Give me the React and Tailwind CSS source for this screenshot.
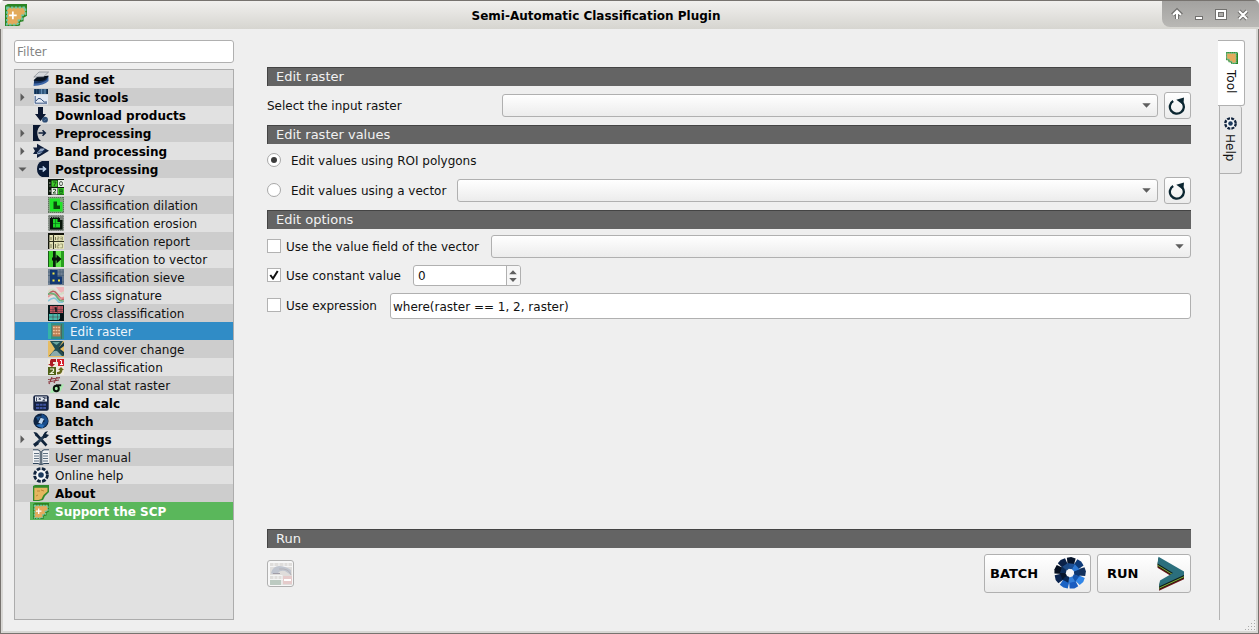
import React from "react";

const Svg = ({ size = 16, children, className = "" }) => (
  <svg width={size} height={size} viewBox="0 0 16 16" className={"shrink-0 " + className}>{children}</svg>
);

const Scp = ({ plus }) => (
  <>
    <path d="M0 1L2 0H16V8.5L13.5 10V12.5L11 13V15.5L9.5 16H0Z" fill="#2b8423" />
    <path d="M1.5 2.5H14.8V7.5L12.3 8.5V11L9.8 12V14L8.5 15H1.5Z" fill="#e3aa5c" stroke="#6cc9a6" strokeWidth="1.4" strokeDasharray="1.8 1" />
    {plus && <path d="M5.7 5.5V11M3 8.2H8.5" stroke="#fff" strokeWidth="1.3" />}
  </>
);

const Life = () => (
  <>
    <circle cx="8" cy="8" r="6.4" fill="#f5f7f9" stroke="#10233d" strokeWidth="2.9" strokeDasharray="3.65 1.375" />
    <circle cx="8" cy="8" r="2.8" fill="#1c3a5e" />
  </>
);

const ringOuter = ["#06142a", "#0d3a78", "#12305c", "#3186e8", "#1a5cc0", "#1b63c4", "#0a2450", "#050f20", "#0a2148"];
const ringInner = ["#1c4f94", "#2d78d2", "#0b356f", "#1253ac", "#347fda", "#0a2a58", "#07162c", "#0c2b56", "#1d4b86"];

const Ring = () => (
  <>
    {ringOuter.map((fill, i) => (
      <path key={"o" + i} transform={"rotate(" + (i * 40 + 4) + " 8 8)"} d="M5.9 .5L8 0L10.3 .6L9.6 4.2L6.6 4.3Z" fill={fill} />
    ))}
    {ringInner.map((fill, i) => (
      <path key={"i" + i} transform={"rotate(" + (i * 40 + 12) + " 8 8)"} d="M6.1 3.4L9.6 3.1L9.1 5.8L7.2 6.1Z" fill={fill} />
    ))}
  </>
);

const icons = {
  band: <><path d="M1 10.5L6 9L15.5 6V10Q11 14.5 .5 15Z" fill="#3f68a8" /><path d="M1 9L5 6L15.5 4.5L14 9Q9 12.5 1 12.5Z" fill="#173463" /><path d="M.5 9.5L5 5H15.8L12 9Q8 11 .5 9.5Z" fill="#08121f" /><path d="M.8 6L6 1H15.6L10.5 5.8Z" fill="#d5d8dc" stroke="#737981" strokeWidth=".6" /></>,
  basic: <><rect x="1" width="14" height="5" fill="#31587f" /><path d="M2.5 0V5M5 0V5" stroke="#102e50" strokeWidth="1.6" /><path d="M8.5 0V5M12 0V5" stroke="#638cb3" /><path d="M14.2 0V5" stroke="#0c2442" strokeWidth="1.4" /><rect x="1" y="5.5" width="14" height="10" fill="#e4eaf4" /><path d="M2.2 7V14.2H14M3 12Q5 8.5 7 9.5T10 12T14 13" fill="none" stroke="#274575" strokeWidth=".9" /></>,
  down: <><path d="M5 0H10V7H13L7.5 14L2 7H5Z" fill="#0b1730" /><circle cx="12" cy="12.7" r="2.9" fill="#2b4b73" /><path d="M10.5 14L13.5 12" stroke="#527299" /></>,
  pre: <><path d="M0 0H8Q4.3 3 4.3 8T8 16H0Z" fill="#0a1730" /><path d="M5.5 8H12M9.5 5.3L12.3 8L9.5 10.7" fill="none" stroke="#10203c" strokeWidth="1.5" /></>,
  proc: <><path d="M0 4.5H4V.8L16 7.8L4 15V11H0L2 8Z" fill="#101f3c" /><path d="M4.3 9.5L7.5 5.5H12L9.5 9Q7 11.5 4.3 11.5Z" fill="#98abc7" /><path d="M5 9.3L9 8.8L12 6.5" fill="none" stroke="#203c68" /></>,
  post: <><path d="M9 0H16V16H9Q4 14 4 8T9 0Z" fill="#0a1a36" /><path d="M6 8H12.5M9.7 5.5L12.5 8L9.7 10.5" fill="none" stroke="#c5d8f0" strokeWidth="1.6" /></>,
  accuracy: <><rect width="16" height="16" fill="#0b160c" /><rect x="3.5" y="1.5" width="6" height="6.3" fill="#3fc928" /><rect x="10" y="1" width="6" height="7" fill="#eaf1e8" /><rect x="3.5" y="9" width="6" height="6.5" fill="#e8efe5" /><rect x="10" y="9" width="6" height="6.5" fill="#3fcb2a" /><path d="M5 3H8L6 7M5 10.3H7.5V12L5 14H8" fill="none" stroke="#164716" strokeWidth=".9" /><ellipse cx="13" cy="4.6" rx="1.5" ry="2.1" fill="none" stroke="#404a40" strokeWidth=".9" /><path d="M11.7 10.3H14.3V12.2H11.7V14.3H14.3V12.2H11.7Z" fill="none" stroke="#0b6116" strokeWidth=".8" /><path d="M1 4H2.5M1 12H3M1.5 7H2.5" stroke="#b0bdb0" /></>,
  dilation: <><rect width="16" height="16" fill="#83a080" /><path d="M1.5 1.5H12V5H14.5V14.5H2Z" fill="#21e429" /><path d="M5.5 4.5H9V8.5H12V12H5.5Z" fill="#094d0c" /><path d="M0 .5H16M.5 0V16M15.5 0V16M0 15.5H16" stroke="#5d715c" strokeDasharray="1 1" /></>,
  erosion: <><rect width="16" height="16" fill="#79817a" /><path d="M2 2H12V5H14.5V14.5H2Z" fill="#07150b" /><path d="M5 4H9.5V7H12V12.5H5Z" fill="#1ed928" /><path d="M7.5 4V12M5 8.5H12" stroke="#0b751a" strokeWidth=".7" /><path d="M0 .5H16M.5 0V16M15.5 0V16M2 2.5H12M0 15.5H16" stroke="#a5ada5" strokeDasharray="1 1.2" /></>,
  report: <><rect width="16" height="16" fill="#e4e4b8" /><path d="M0 1H16M.5 0V16" stroke="#11130b" strokeWidth="1.8" /><path d="M5.5 1V16M0 8.5H16" stroke="#2e301d" strokeWidth="1.1" /><path d="M3 4V7M3 11V15M7.5 4V7M7.5 11V15" stroke="#747451" /><path d="M9.3 4H11V5.3H9.3V7H11.3M12.3 4H14.5V7H12.3M12.3 5.5H14M9.3 11H11V12.7H9.3V14.8H11.3M12.3 11H14.5V14.8H12.3" fill="none" stroke="#85855d" strokeWidth=".7" /></>,
  vector: <><rect width="16" height="16" fill="#185918" /><rect x="1" width="4" height="16" fill="#39cf29" /><rect x="8" width="5" height="16" fill="#62e84c" /><path d="M6 0V16" stroke="#06220b" strokeWidth="2" /><rect x="13" width="3" height="16" fill="#289e1f" /><path d="M4 6.5H8.5V3.5L13.5 8L8.5 12.5V9.5H4Z" fill="#06120a" /></>,
  sieve: <><rect width="16" height="16" fill="#718194" /><path d="M0 3H16M0 6.5H16M3 0V16M12 0V16M15 0V16M0 13H16" stroke="#4d6276" strokeWidth=".8" /><path d="M2 1H9.5V7.5H14V15H2Z" fill="#123872" /><path d="M4.5 3.5H6.5V5.5H4.5M4.5 10.5H6.5V12.5H4.5M10 10.5H12V12.5H10" fill="#f1e545" /></>,
  signature: <><rect width="16" height="16" fill="#e5dedb" /><path d="M8 0H16V7L12 5Z" fill="#efb5ba" /><path d="M0 5Q5 0 8 5T16 5" fill="none" stroke="#d2dfc7" strokeWidth="2" /><path d="M0 8Q5 1 9 7T16 12" fill="none" stroke="#bd5c61" strokeWidth="1.6" /><path d="M0 10Q5 5 9 9T16 10" fill="none" stroke="#e99294" strokeWidth="1.6" /><path d="M0 7Q6 5 9 10T16 14" fill="none" stroke="#6db27a" strokeWidth="1.7" /><path d="M0 14Q6 9 9 13T15 15" fill="none" stroke="#85c7d8" strokeWidth="1.7" /></>,
  cross: <><rect width="16" height="16" fill="#07191c" /><rect x="2" y="1" width="13" height="7" fill="#c75860" /><rect x="1" y="9" width="11" height="6" fill="#48b9aa" /><path d="M2 4.5H15M1 12H12M5 1V15M9.5 1V15M13 1V8M2 6.5H15" stroke="#4c3540" strokeWidth=".5" /><path d="M6.5 3H8V7M12 10H14.5V12L12 14.5H15" fill="none" stroke="#041014" strokeWidth="1.5" /></>,
  edit: <><rect width="16" height="16" fill="#348f85" /><path d="M1.5 0V16" stroke="#35b4a7" strokeWidth="3" /><rect x="4.5" y="2.5" width="8" height="11" fill="#ba7a50" /><path d="M5 4.5H12M5 7.5H12M5 10.5H12" stroke="#f0c49c" strokeWidth="1.4" strokeDasharray="1.8 .8" /><path d="M13.5 1V16" stroke="#48685c" /></>,
  land: <><rect width="16" height="16" fill="#e7bd63" /><path d="M2 0H15L10.5 7L16 15H1L7 8Z" fill="#214e55" /><path d="M4 1H12L8.5 4Z" fill="#6aa59e" /><path d="M2 15Q5 9 9 10L14 15Z" fill="#8aabac" /><path d="M10 7L16 1V5L12 8L16 11V15Z" fill="#183943" /></>,
  reclass: <><rect width="16" height="16" fill="#eee9dd" /><path d="M3 0H8V3H5V5H7L4 8L0 5H2V2Z" fill="#ab1b23" /><path d="M9 0H16V7H10V3H9Z" fill="#d41f2a" /><path d="M12 1.5H13.5V5.5M12 5.5H15" fill="none" stroke="#fff" /><rect x="0" y="8" width="8" height="8" fill="#4d6116" /><path d="M2 10H5.5V12L2.5 14.5H6" fill="none" stroke="#e9efd6" strokeWidth="1.2" /><path d="M13 8L16 11H14.5Q14 15.5 9 15.5V13Q12 13.5 12 11H10Z" fill="#676a1b" /></>,
  zonal: <><path d="M4 10.5L16 7L12.5 14.5L2 16Z" fill="#a7ebae" /><path d="M0 5L11 3M0 2.5L12 .7M4 0L1 7M9 0L6 6" stroke="#8d3a43" strokeWidth="1.2" /><ellipse cx="8.3" cy="11.5" rx="2.5" ry="2.8" fill="none" stroke="#08140c" strokeWidth="2" /><path d="M8 8.3H13.2" stroke="#08140c" strokeWidth="1.9" /></>,
  calc: <><rect x=".3" y=".3" width="15.4" height="15.4" rx="2" fill="#14213f" /><rect x="2" y="1.5" width="12" height="5" fill="#e2e7ef" /><path d="M3.5 2.5V6M5.7 2.7L7.7 5M7.7 2.7L5.7 5M9.7 2.5H11.7V4L9.7 5.7H12M13 2V4" fill="none" stroke="#14213f" strokeWidth=".8" /><path d="M3 9.7H13M3 13H13" stroke="#3f54a0" strokeWidth="2" strokeDasharray="3 .6" /></>,
  batch: <><circle cx="8" cy="8" r="7.6" fill="#0d2342" /><path d="M9 1Q14 3 15 8Q14 13 9 15L7 12L12 8L8 4Z" fill="#184c8b" /><path d="M3 12Q6 15 10 15L11 12L7 11Z" fill="#2b70ba" /><path d="M3 4L8 3L5 8Z" fill="#245891" /><path d="M7.7 4.8L11 6L8.7 11L5.3 9.7Z" fill="#bdd5ef" /></>,
  settings: <><path d="M3 3L13.5 14.5" stroke="#10243b" strokeWidth="2.6" /><path d="M.5 1L3.5 1.5L5.5 4.5L3 5.5Z" fill="#10243b" /><path d="M3 13L12 4.5" stroke="#253c54" strokeWidth="3" /><path d="M10 4L12 1L15 0L13 3L16 4L13 7H10Z" fill="#10243b" /><path d="M0 13L4 10.5L6 13L2 16Z" fill="#10243b" /></>,
  manual: <><path d="M0 1Q4 0 7.2 2V15Q4 13 0 14ZM16 1Q12 0 8.8 2V15Q12 13 16 14Z" fill="#f1f3f5" /><path d="M7.2 2V16M8.8 2V16" stroke="#1e3349" strokeWidth=".9" /><path d="M1 4.5H6M1 7H6M1 9.5H6M1 12H6M10 4.5H15M10 7H15M10 9.5H15M10 12H15" stroke="#5e7183" /><path d="M0 .8H5L7 2M16 .8H11L9 2M0 14.5H5L7.5 15.5M16 14.5H11L8.5 15.5" fill="none" stroke="#2c435a" /></>,
  help: <Life />,
  about: <><path d="M0 1L2 0H16V7L12 11L10 15L6 16H0Z" fill="#32892a" /><path d="M1.3 2.7H14.5V6.5L10.5 10L8.5 14L5.5 15H1.3Z" fill="#e5b65f" /><path d="M4 6H7M8 5L11 6M3 11L5 10" stroke="#b98233" strokeWidth=".9" /></>,
  support: <Scp plus />,
};

const rows = [
  ["Band set", "band", 1],
  ["Basic tools", "basic", 1, "r"],
  ["Download products", "down", 1],
  ["Preprocessing", "pre", 1, "r"],
  ["Band processing", "proc", 1, "r"],
  ["Postprocessing", "post", 1, "d"],
  ["Accuracy", "accuracy", 2],
  ["Classification dilation", "dilation", 2],
  ["Classification erosion", "erosion", 2],
  ["Classification report", "report", 2],
  ["Classification to vector", "vector", 2],
  ["Classification sieve", "sieve", 2],
  ["Class signature", "signature", 2],
  ["Cross classification", "cross", 2],
  ["Edit raster", "edit", 2],
  ["Land cover change", "land", 2],
  ["Reclassification", "reclass", 2],
  ["Zonal stat raster", "zonal", 2],
  ["Band calc", "calc", 1],
  ["Batch", "batch", 1],
  ["Settings", "settings", 1, "r"],
  ["User manual", "manual", 0],
  ["Online help", "help", 0],
  ["About", "about", 1],
  ["Support the SCP", "support", 1],
];

function TreeRow({ row, index }) {
  const [label, icon, kind, arrow] = row;
  const selected = label === "Edit raster";
  const support = icon === "support";
  const bg = selected ? "bg-[#308cc6] text-[#eef5fa]" : index % 2 && !support ? "bg-[#cdcdcd]" : "bg-[#e1e1e1]";
  const weight = kind === 1 ? (support ? "font-bold" : "font-bold text-black") : "";
  return (
    <div className={"flex h-[18px] " + bg}>
      <div className={"flex shrink-0 items-center justify-center " + (kind === 2 ? "w-[30px]" : "w-[15px]")}>
        {arrow && (
          <svg width="9" height="9" viewBox="0 0 9 9">
            <path d={arrow === "r" ? "M2.5 .3L6.5 4.3L2.5 8.3Z" : "M.5 2.5H8.5L4.5 6.5Z"} fill="#5c5c5c" />
          </svg>
        )}
      </div>
      <div className={"flex min-w-0 grow items-center pl-[3px] " + (support ? "bg-[#5ab75b] text-white" : "")}>
        <Svg>{icons[icon]}</Svg>
        <span className={"pt-[2px] pl-[6px] leading-[18px] whitespace-nowrap " + weight}>{label}</span>
      </div>
    </div>
  );
}

const Heading = ({ children }) => (
  <div className="h-[19px] shrink-0 border-t border-l border-[#444] bg-[#646464] pl-2 text-[13px] leading-[17px] text-[#f2f2f2]">{children}</div>
);

const box = "shrink-0 rounded-[3px] border border-[#b0b0b0] ";
const face = "bg-linear-to-b from-white to-[#ececec] ";

const Combo = ({ className }) => (
  <div className={box + face + "flex h-[23px] items-center justify-end pr-[6px] " + className}>
    <svg width="9" height="5" viewBox="0 0 9 5"><path d="M.3 .3H8.7L4.5 4.7Z" fill="#5e5e5e" /></svg>
  </div>
);

const Refresh = () => (
  <button className={box + face + "ml-[6px] flex h-[27px] w-[27px] items-center justify-center pr-[1px]"}>
    <svg width="18" height="18" viewBox="0 0 18 18">
      <path d="M5.2 4A7 6.8 0 1 0 14 5.2" fill="none" stroke="#0b2631" strokeWidth="2.3" />
      <path d="M8.3 2.8L16 .6L15.4 8Z" fill="#0b2631" />
    </svg>
  </button>
);

const Radio = ({ on }) => (
  <div className="mb-[2px] flex h-[14px] w-[14px] shrink-0 items-center justify-center rounded-full border border-[#a8a8a8] bg-white">
    {on && <div className="h-[6px] w-[6px] rounded-full bg-[#3c3c3c]" />}
  </div>
);

const Check = ({ on }) => (
  <div className="mb-[2px] flex h-[14px] w-[14px] shrink-0 items-center justify-center border border-[#b2b2b2] bg-white">
    {on && <svg width="10" height="10" viewBox="0 0 10 10"><path d="M1.3 5L4 8.5L8.7 1" fill="none" stroke="#111" strokeWidth="2" /></svg>}
  </div>
);

function TitleBar() {
  return (
    <div className="flex h-[29px] shrink-0 border-t border-[#77736f] bg-linear-to-b from-[#f1f0ee] to-[#d6d5d0]">
      <div className="w-[30px] pt-[3px] pl-[5px]"><Svg size={22}><Scp plus /></Svg></div>
      <div className="grow pt-[1px] text-center text-[12px] leading-[29px] font-bold text-black">Semi-Automatic Classification Plugin</div>
      <div className="h-[26px] w-[97px] shrink-0 rounded-bl-[8px] bg-linear-to-b from-[#a3a2a0] to-[#b9b8b5]">
        <svg width="97" height="26" viewBox="0 0 97 26" fill="none">
          <g stroke="#71706e" strokeWidth="4"><path d="M15 18V10M10.5 14L15 9.5L19.5 14M33 17H41M55 10H63V17H55ZM77 10L85 18M85 10L77 18" /></g>
          <g stroke="#fff" strokeWidth="2"><path d="M15 18V10M11 14L15 10L19 14M34 17H40M55 10H63V17H55ZM77 10L85 18M85 10L77 18" /></g>
        </svg>
      </div>
    </div>
  );
}

const chevron = "M2.5 .8L28 15.5V19L3 30.5L4 24.5L17 17L1.5 7.5Z";

export default function App() {
  return (
    <div className="flex h-[634px] w-[1259px] flex-col overflow-hidden rounded-t-[5px] bg-[#efefef] font-['DejaVu_Sans',sans-serif] text-[12px] text-[#111]">
      <TitleBar />
      <div className="flex grow border-r border-b border-l border-[#77736f]">
        <div className="flex grow border-r-2 border-b-2 border-l-2 border-[#d8d7d4]">
          <aside className="ml-[11px] flex w-[220px] shrink-0 flex-col pt-[11px]">
            <div className={box + "h-[23px] bg-white pl-[2px] leading-[23px] text-[#858585]"}>Filter</div>
            <div className="mt-[6px] h-[551px] border border-[#acacac] bg-[#e1e1e1]">
              {rows.map((r, i) => <TreeRow key={r[0]} row={r} index={i} />)}
            </div>
          </aside>
          <main className="ml-[33px] flex w-[924px] shrink-0 flex-col pt-[38px]">
            <Heading>Edit raster</Heading>
            <div className="flex h-[39px] items-center">
              <span className="w-[235px]">Select the input raster</span>
              <Combo className="w-[656px]" />
              <Refresh />
            </div>
            <Heading>Edit raster values</Heading>
            <div className="flex h-[33px] items-center"><Radio on /><span className="pl-[10px]">Edit values using ROI polygons</span></div>
            <div className="mb-[6px] flex h-[27px] items-center">
              <Radio /><span className="w-[176px] pl-[10px]">Edit values using a vector</span>
              <Combo className="w-[701px]" />
              <Refresh />
            </div>
            <Heading>Edit options</Heading>
            <div className="flex h-[35px] items-center"><Check /><span className="w-[210px] pl-[5px]">Use the value field of the vector</span><Combo className="w-[700px]" /></div>
            <div className="flex h-[23px] items-center">
              <Check on /><span className="w-[132px] pl-[5px]">Use constant value</span>
              <div className={box + "flex h-[21px] w-[108px] bg-white"}>
                <span className="grow pl-1 leading-[21px]">0</span>
                <span className="flex w-[14px] items-center justify-center rounded-r-[2px] border-l border-[#b0b0b0] bg-[#f6f6f6] pr-[1px]">
                  <svg width="8" height="12" viewBox="0 0 8 12"><path d="M.2 4.3H7.8L4 .3ZM.2 8H7.8L4 12Z" fill="#5f5f5f" /></svg>
                </span>
              </div>
            </div>
            <div className="flex h-[38px] items-center">
              <Check /><span className="w-[109px] pl-[5px]">Use expression</span>
              <div className={box + "h-[26px] w-[801px] bg-white pl-[2px] leading-[27px]"}>where(raster == 1, 2, raster)</div>
            </div>
            <div className="mt-auto"><Heading>Run</Heading></div>
            <div className="mb-[38px] flex h-[45px] items-end">
              <div className={box + "mb-[6px] flex h-[27px] w-[27px] items-center justify-center bg-[#f7f7f7]"}>
                <svg width="22" height="22" viewBox="0 0 22 22">
                  <rect width="22" height="22" fill="#dfdddb" />
                  <path d="M0 3.5H22M0 12.5H12M0 16.5H22M4 0V4M9 0V4M14 0V4M18 0V4M4 13V17M8 13V17M12 12V22" stroke="#f4f4f4" />
                  <path d="M1 10Q3 3 9 3Q15 3 21 7V12L15 8Q10 7 8 10L2 11Z" fill="#c0c5cf" />
                  <path d="M3 10.5H10" stroke="#a19ea8" /><path d="M9 6Q19 5 21 12" fill="none" stroke="#b5b3b7" />
                  <rect x="13" y="13" width="9" height="8" fill="#e5cbcb" /><path d="M14 17H21" stroke="#fff" strokeWidth="2" /><rect y="17" width="11" height="5" fill="#bccac1" />
                </svg>
              </div>
              <button className={box + face + "ml-auto flex h-[39px] w-[107px] items-center pl-[5px] text-[13px] font-bold text-black"}>
                <span className="w-[64px] text-left">BATCH</span>
                <Svg size={32} className="mb-[2px]"><Ring /></Svg>
              </button>
              <button className={box + face + "ml-[6px] flex h-[39px] w-[94px] items-center pl-[9px] text-[13px] font-bold text-black"}>
                <span className="w-[49px] text-left">RUN</span>
                <svg width="30" height="36" viewBox="0 0 30 36">
                  <path transform="translate(0 4.3)" d={chevron} fill="#6b1516" />
                  <path transform="translate(0 3)" d={chevron} fill="#161a10" />
                  <path transform="translate(0 2.2)" d={chevron} fill="#8bb438" />
                  <path transform="translate(0 1.2)" d={chevron} fill="#0c1b1d" />
                  <path d={chevron} fill="#2b6f7d" />
                </svg>
              </button>
            </div>
          </main>
          <div className="ml-[27px] flex grow flex-col pt-[11px]">
            <div className="flex h-[66px] w-[27px] flex-col items-center rounded-r-[3px] border border-l-0 border-[#b0b0b0] bg-white pt-[11px] pl-[1px]">
              <Svg size={12} className="rotate-90"><Scp /></Svg>
              <span className="mt-[6px] mr-[2px] leading-[14px] [writing-mode:vertical-rl]">Tool</span>
            </div>
            <div className="ml-[1px] flex h-[68px] w-[23px] flex-col items-center rounded-r-[3px] border border-t-0 border-[#b0b0b0] bg-[#e9e9e9] pt-[11px]">
              <Svg size={13}><Life /></Svg>
              <span className="mt-[4px] mr-[1px] leading-[14px] [writing-mode:vertical-rl]">Help</span>
            </div>
            <div className="ml-[1px] h-[446px] border-l border-[#b4b4b4]" />
            <svg className="mt-auto ml-auto" width="11" height="11" viewBox="0 0 11 11">
              <path d="M9 .5H10M6 3.5H10M3 6.5H10M0 9.5H10" stroke="#aaa" strokeDasharray="1 2" />
            </svg>
          </div>
        </div>
      </div>
    </div>
  );
}
